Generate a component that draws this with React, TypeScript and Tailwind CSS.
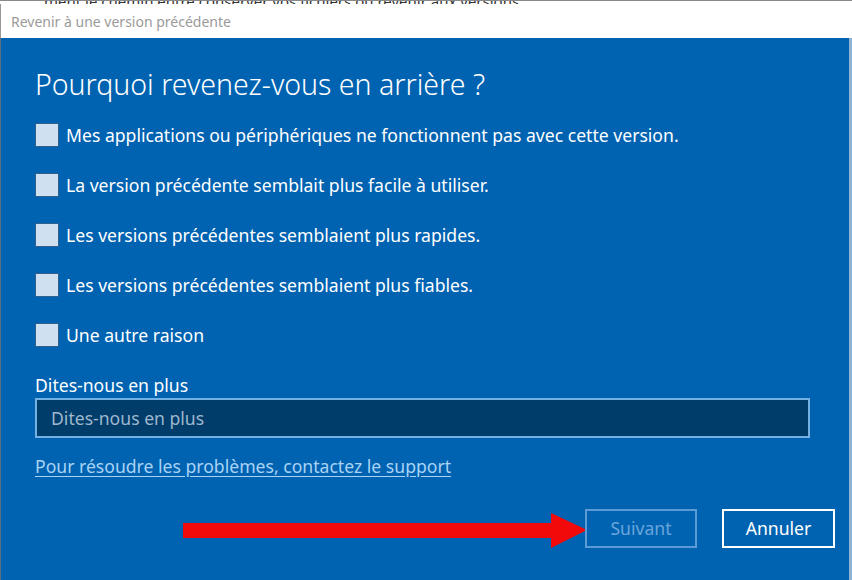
import React from 'react';

const reasons = [
  'Mes applications ou périphériques ne fonctionnent pas avec cette version.',
  'La version précédente semblait plus facile à utiliser.',
  'Les versions précédentes semblaient plus rapides.',
  'Les versions précédentes semblaient plus fiables.',
  'Une autre raison',
];

const RollbackDialog: React.FC = () => {
  return (
    <div className="w-[852px] h-[580px] flex flex-col bg-white font-['Segoe_UI','Noto_Sans',sans-serif] overflow-hidden">
      {/* bout de fenêtre derrière */}
      <div className="h-[4px] overflow-hidden border-t border-[#8a8a8a] bg-white">
        <div className="-mt-[11px] pl-[44px] text-[15px] text-[#333] whitespace-nowrap">
          ment le chemin entre conserver vos fichiers ou revenir aux versions
        </div>
      </div>

      <div className="h-[34px] flex items-center pl-[10px] text-[14px] text-[#9a9a9a] border-l border-[#999]">
        Revenir à une version précédente
      </div>

      <div className="flex-1 bg-[#0063b1] border-l border-[#5a6f82] border-r-[3px] border-r-[#8fb3d4] pl-[34px] pr-[12px] text-white">
        <h1 className="pt-[28px] text-[28.5px] font-light leading-[36px]">
          Pourquoi revenez-vous en arrière ?
        </h1>

        <div className="mt-[8px] flex flex-col">
          {reasons.map(r => (
            <label key={r} className="h-[50px] flex items-center gap-[7px] text-[17.6px]">
              <span className="w-[24px] h-[24px] bg-[#cfe0f0] border border-[#30608e] shrink-0" />
              <span>{r}</span>
            </label>
          ))}
        </div>

        <div className="mt-[13px] text-[17.6px] leading-[24px]">Dites-nous en plus</div>
        <div className="mt-[1px] w-[775px] h-[40px] border-2 border-[#74b0e2] bg-[#003d6a] flex items-center pl-[14px] text-[17.6px] text-[#9fb7cd]">
          Dites-nous en plus
        </div>

        <div className="mt-[16px] text-[17.6px] text-[#a9d3f5] underline underline-offset-[3px] leading-[24px]">
          Pour résoudre les problèmes, contactez le support
        </div>

        <div className="mt-[31px] flex items-center">
          <svg width="402" height="38" viewBox="0 0 402 38" className="ml-[148px] shrink-0">
            <rect x="0" y="13" width="372" height="15" fill="#f20a0a" />
            <polygon points="368,3 404,20 368,38" fill="#f20a0a" />
          </svg>
          <button className="shrink-0 w-[112px] h-[39px] border-2 border-[#5d9bd6] text-[17.6px] text-[#6aa6dc]">
            Suivant
          </button>
          <button className="shrink-0 ml-[25px] w-[113px] h-[39px] border-2 border-white text-[17.6px] text-white">
            Annuler
          </button>
        </div>
      </div>
    </div>
  );
};

export default RollbackDialog;
